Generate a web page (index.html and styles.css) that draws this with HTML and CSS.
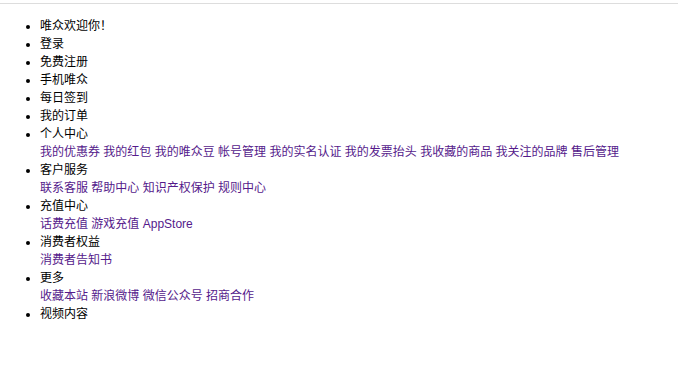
FILE: index.html
```html
<!DOCTYPE html>
<html lang="zh-CN">
<head>
  <meta charset="UTF-8" />
  <title>唯众</title>
  <link rel="stylesheet" href="styles.css">
</head>
<body>
  <div class="topbar"></div>
  <ul class="site-nav">
    <li>唯众欢迎你<span class="cjk">！</span></li>
    <li>登录</li>
    <li>免费注册</li>
    <li>手机唯众</li>
    <li>每日签到</li>
    <li>我的订单</li>
    <li>个人中心
      <div class="sub">
        <a href="#">我的优惠券</a> <a href="#">我的红包</a> <a href="#">我的唯众豆</a> <a href="#">帐号管理</a> <a href="#">我的实名认证</a> <a href="#">我的发票抬头</a> <a href="#">我收藏的商品</a> <a href="#">我关注的品牌</a> <a href="#">售后管理</a>
      </div>
    </li>
    <li>客户服务
      <div class="sub">
        <a href="#">联系客服</a> <a href="#">帮助中心</a> <a href="#">知识产权保护</a> <a href="#">规则中心</a>
      </div>
    </li>
    <li>充值中心
      <div class="sub">
        <a href="#">话费充值</a> <a href="#">游戏充值</a> <a href="#">AppStore</a>
      </div>
    </li>
    <li>消费者权益
      <div class="sub">
        <a href="#">消费者告知书</a>
      </div>
    </li>
    <li>更多
      <div class="sub">
        <a href="#">收藏本站</a> <a href="#">新浪微博</a> <a href="#">微信公众号</a> <a href="#">招商合作</a>
      </div>
    </li>
    <li>视频内容</li>
  </ul>
</body>
</html>
```

FILE: styles.css
```css
body {
  margin: 0;
  font-family: "Liberation Sans", "Noto Sans CJK SC", sans-serif;
  font-size: 12px;
  line-height: 18px;
  color: #000;
  background: #fff;
}
.topbar {
  height: 3px;
  border-bottom: 1px solid #ddd;
}
.site-nav {
  margin: 12px 0 0;
  padding-left: 40px;
}
.cjk {
  font-family: "Noto Sans CJK JP", sans-serif;
}
.sub a {
  color: #551a8b;
  text-decoration: none;
}
```
